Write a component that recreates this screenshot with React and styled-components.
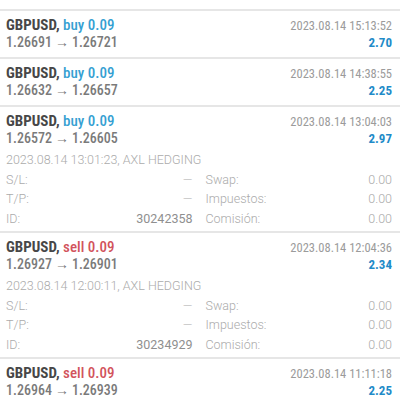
import React from 'react';
import styled, { createGlobalStyle } from 'styled-components';

const GlobalStyle = createGlobalStyle`
  html, body {
    margin: 0;
    padding: 0;
    background: #ffffff;
  }
  body {
    font-family: "Roboto Condensed", "Roboto", "Liberation Sans", sans-serif;
  }
`;

const Screen = styled.div`
  width: 400px;
  height: 400px;
  overflow: hidden;
  background: #ffffff;
`;

// the history list is scrolled, so the first row is mostly hidden
const List = styled.div`
  display: flex;
  flex-direction: column;
  margin-top: -39px;
`;

const Row = styled.div`
  display: flex;
  flex-direction: column;
  border-top: 2px solid #e6e6e6;
  padding: 6px 8px ${(p) => (p.$open ? '3px' : '7px')} 6px;
`;

const Line = styled.div`
  display: flex;
  justify-content: space-between;
  align-items: baseline;
  height: ${(p) => p.$h}px;
`;

const Title = styled.div`
  font-family: "Roboto Condensed", "Roboto", sans-serif;
  font-size: 15px;
  line-height: 17px;
  font-weight: 700;
  color: #474747;
`;

const Side = styled.span`
  color: ${(p) => (p.$type === 'sell' ? '#d2535c' : '#35a0d2')};
  font-weight: 500;
`;

const Prices = styled.div`
  font-family: "Roboto Condensed", "Roboto", sans-serif;
  font-size: 14px;
  line-height: 16px;
  font-weight: 500;
  color: #7a7a7a;
`;

const Arrow = styled.span`
  font-size: 14px;
  padding: 0 3px;
`;

const Time = styled.div`
  font-family: "Roboto Condensed", "Roboto", sans-serif;
  font-size: 12.5px;
  line-height: 17px;
  font-weight: 400;
  color: #9b9b9b;
`;

const Profit = styled.div`
  font-family: "Roboto Condensed", "Roboto", sans-serif;
  font-size: 13px;
  line-height: 16px;
  font-weight: 700;
  color: ${(p) => (p.$loss ? '#d2535c' : '#1f8bc8')};
`;

const Details = styled.div`
  display: flex;
  flex-direction: column;
  margin-top: 4px;
  font-family: "Roboto", "Liberation Sans", sans-serif;
  font-size: 12.5px;
  font-weight: 300;
  line-height: 19.5px;
  color: #ababab;
`;

const Grid = styled.div`
  display: grid;
  grid-template-columns: 1fr 1fr;
  column-gap: 13px;
`;

const Field = styled.div`
  display: flex;
  justify-content: space-between;
`;

const Value = styled.span`
  color: ${(p) => (p.$strong ? '#8f8f8f' : '#ababab')};
  font-weight: ${(p) => (p.$strong ? 400 : 300)};
`;

const trades = [
  { side: 'buy', open: '1.26710', close: '1.26736', time: '2023.08.14 15:40:12', profit: '11.52' },
  { side: 'buy', open: '1.26691', close: '1.26721', time: '2023.08.14 15:13:52', profit: '2.70' },
  { side: 'buy', open: '1.26632', close: '1.26657', time: '2023.08.14 14:38:55', profit: '2.25' },
  {
    side: 'buy', open: '1.26572', close: '1.26605', time: '2023.08.14 13:04:03', profit: '2.97',
    detail: { opened: '2023.08.14 13:01:23', id: '30242358' },
  },
  {
    side: 'sell', open: '1.26927', close: '1.26901', time: '2023.08.14 12:04:36', profit: '2.34',
    detail: { opened: '2023.08.14 12:00:11', id: '30234929' },
  },
  { side: 'sell', open: '1.26964', close: '1.26939', time: '2023.08.14 11:11:18', profit: '2.25' },
];

const Trade = ({ t }) => (
  <Row $open={!!t.detail}>
    <Line $h={17}>
      <Title>
        GBPUSD, <Side $type={t.side}>{t.side} 0.09</Side>
      </Title>
      <Time>{t.time}</Time>
    </Line>
    <Line $h={16}>
      <Prices>
        {t.open}<Arrow>→</Arrow>{t.close}
      </Prices>
      <Profit>{t.profit}</Profit>
    </Line>
    {t.detail && (
      <Details>
        <div>{t.detail.opened}, AXL HEDGING</div>
        <Grid>
          <Field><span>S/L:</span><Value>—</Value></Field>
          <Field><span>Swap:</span><Value>0.00</Value></Field>
          <Field><span>T/P:</span><Value>—</Value></Field>
          <Field><span>Impuestos:</span><Value>0.00</Value></Field>
          <Field><span>ID:</span><Value $strong>{t.detail.id}</Value></Field>
          <Field><span>Comisión:</span><Value>0.00</Value></Field>
        </Grid>
      </Details>
    )}
  </Row>
);

const App = () => (
  <>
    <GlobalStyle />
    <Screen>
      <List>
        {trades.map((t, i) => (
          <Trade key={i} t={t} />
        ))}
      </List>
    </Screen>
  </>
);

export default App;
